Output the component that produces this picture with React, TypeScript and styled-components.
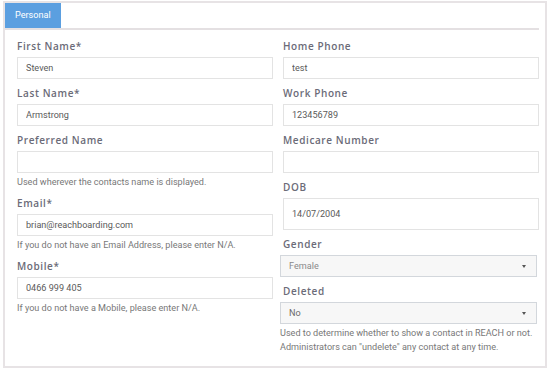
import styled, { createGlobalStyle } from "styled-components";

const GlobalStyle = createGlobalStyle`
  body {
    margin: 0;
    background: #fff;
    font-family: Roboto, "Liberation Sans", sans-serif;
  }
`;

interface TextField {
  label: string;
  value?: string;
  help?: string[];
  tall?: boolean;
  select?: boolean;
  muted?: boolean;
}

const leftFields: TextField[] = [
  { label: "First Name*", value: "Steven" },
  { label: "Last Name*", value: "Armstrong" },
  {
    label: "Preferred Name",
    value: "",
    help: ["Used wherever the contacts name is displayed."],
  },
  {
    label: "Email*",
    value: "brian@reachboarding.com",
    help: ["If you do not have an Email Address, please enter N/A."],
  },
  {
    label: "Mobile*",
    value: "0466 999 405",
    help: ["If you do not have a Mobile, please enter N/A."],
  },
];

const rightFields: TextField[] = [
  { label: "Home Phone", value: "test" },
  { label: "Work Phone", value: "123456789" },
  { label: "Medicare Number", value: "" },
  { label: "DOB", value: "14/07/2004", tall: true },
  { label: "Gender", value: "Female", select: true, muted: true },
  {
    label: "Deleted",
    value: "No",
    select: true,
    help: [
      "Used to determine whether to show a contact in REACH or not.",
      'Administrators can "undelete" any contact at any time.',
    ],
  },
];

function Field({ label, value, help, tall, select, muted }: TextField) {
  return (
    <FieldGroup>
      <Label>{label}</Label>
      {select ? (
        <SelectBox>
          <SelectValue $muted={muted}>{value}</SelectValue>
          <Caret />
        </SelectBox>
      ) : (
        <Input $tall={tall} readOnly defaultValue={value} />
      )}
      {help && (
        <Help $shift={select}>
          {help.map((line) => (
            <div key={line}>{line}</div>
          ))}
        </Help>
      )}
    </FieldGroup>
  );
}

export default function App() {
  return (
    <>
      <GlobalStyle />
      <Panel>
        <TabBar>
          <Tab>Personal</Tab>
        </TabBar>
        <FormGrid>
          <Column>
            {leftFields.map((f) => (
              <Field key={f.label} {...f} />
            ))}
          </Column>
          <Column>
            {rightFields.map((f) => (
              <Field key={f.label} {...f} />
            ))}
          </Column>
        </FormGrid>
      </Panel>
    </>
  );
}

const Panel = styled.div`
  box-sizing: border-box;
  margin: 1px 0 0 3px;
  width: 544px;
  height: 367px;
  border: 2px solid #e7e3e5;
  background: #fff;
`;

const TabBar = styled.div`
  display: flex;
  height: 25px;
  margin-right: 6px;
  border-bottom: 2px solid #e4e0e2;
`;

const Tab = styled.div`
  background: #5b9fe0;
  color: #fff;
  font-size: 9.1px;
  line-height: 25px;
  padding: 0 10px;
`;

const FormGrid = styled.div`
  display: grid;
  grid-template-columns: 256px 256px;
  column-gap: 10px;
  padding: 9px 0 0 12px;
`;

const Column = styled.div`
  display: flex;
  flex-direction: column;
`;

const FieldGroup = styled.div`
  margin-bottom: 7px;
`;

const Label = styled.label`
  display: block;
  font-family: "Open Sans", Roboto, sans-serif;
  font-size: 10px;
  font-weight: 600;
  letter-spacing: 0.6px;
  line-height: 14px;
  margin-bottom: 4px;
  color: #6b6b78;
`;

const Input = styled.input<{ $tall?: boolean }>`
  box-sizing: border-box;
  display: block;
  width: 100%;
  height: ${({ $tall }) => ($tall ? "32px" : "22px")};
  margin: 0;
  padding: 0 8px;
  border: 1px solid #e3e3e3;
  background: #fff;
  font-family: inherit;
  font-size: 9.1px;
  color: #5a5a5a;
  outline: none;
`;

const SelectBox = styled.div`
  box-sizing: border-box;
  display: flex;
  align-items: center;
  justify-content: space-between;
  width: 257px;
  height: 22px;
  margin-left: -3px;
  padding: 0 10px 0 8px;
  border: 1px solid #d3d7dc;
  background: #f7f7f7;
`;

const SelectValue = styled.span<{ $muted?: boolean }>`
  font-size: 9.1px;
  color: ${({ $muted }) => ($muted ? "#8a8a8a" : "#6a6a6a")};
`;

const Caret = styled.span`
  width: 0;
  height: 0;
  border-left: 2.5px solid transparent;
  border-right: 2.5px solid transparent;
  border-top: 3px solid #555;
`;

const Help = styled.div<{ $shift?: boolean }>`
  margin: 2px 0 0 ${({ $shift }) => ($shift ? "-3px" : "0")};
  font-size: 9.1px;
  line-height: 14px;
  color: #787878;
  white-space: nowrap;
`;
